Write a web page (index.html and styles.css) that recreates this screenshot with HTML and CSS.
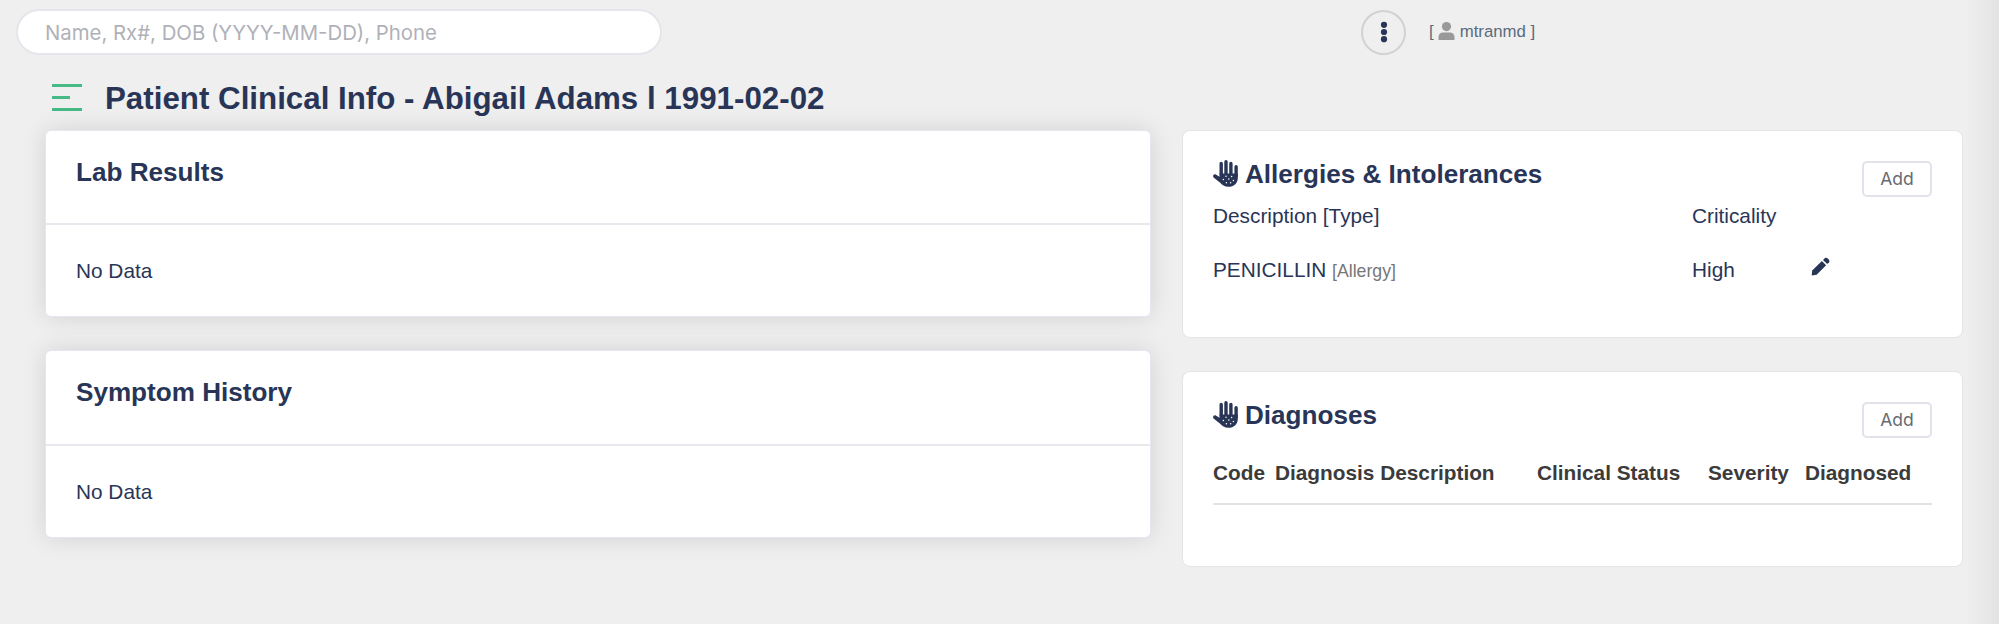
FILE: index.html
```html
<!DOCTYPE html>
<html lang="en">
<head>
<meta charset="utf-8">
<title>Patient Clinical Info</title>
<link rel="stylesheet" href="styles.css">
</head>
<body>
<svg class="defs" width="0" height="0">
  <symbol id="hand" viewBox="0 0 25 27">
    <path d="M8.2 14V3.4M13 14V1.7M17.9 14V3.4M23.1 16V6.8" fill="none" stroke="currentColor" stroke-width="3.4" stroke-linecap="round"/>
    <path d="M6.5 13.5H24.8V18C24.8 23.6 20.5 26.8 15.5 26.8C11.5 26.8 9 25 7.2 22.8L.6 17.4C-.8 15.9.8 13.6 2.8 14.5L6.5 16.7Z" fill="currentColor"/>
    <g fill="#fff"><circle cx="13" cy="16.2" r=".75"/><circle cx="18.6" cy="16.6" r=".75"/><circle cx="10.4" cy="19.6" r=".75"/><circle cx="15.8" cy="19" r=".75"/><circle cx="20.4" cy="20.4" r=".75"/><circle cx="13.4" cy="22.8" r=".75"/><circle cx="17.6" cy="22.8" r=".75"/></g>
  </symbol>
</svg>
<header class="topbar">
  <input class="search" type="text" placeholder="Name, Rx#, DOB (YYYY-MM-DD), Phone">
  <div class="account">
    <button class="more" aria-label="More"><svg width="8" height="22" viewBox="0 0 8 22"><circle cx="4" cy="3.8" r="3.1"/><circle cx="4" cy="11" r="3.1"/><circle cx="4" cy="18.2" r="3.1"/></svg></button>
    <span class="user">[<svg class="person" width="17" height="18" viewBox="0 0 17 18"><circle cx="8.5" cy="4.6" r="4.6"/><path d="M.5 18V15.2C.5 12.5 2.4 10.6 5 10.6H12C14.6 10.6 16.5 12.5 16.5 15.2V18Z"/></svg><span>mtranmd ]</span></span>
  </div>
</header>
<div class="heading">
  <svg class="menu" width="30" height="28" viewBox="0 0 30 28"><path d="M0 1.5H30M0 13.5H18M0 25.5H30"/></svg>
  <h1>Patient Clinical Info - Abigail Adams l 1991-02-02</h1>
</div>
<main class="columns">
  <div class="left">
    <section class="panel">
      <h2>Lab Results</h2>
      <p>No Data</p>
    </section>
    <section class="panel">
      <h2>Symptom History</h2>
      <p>No Data</p>
    </section>
  </div>
  <div class="right">
    <section class="card allergies">
      <div class="card-head"><h2><svg class="hand"><use href="#hand"/></svg>Allergies &amp; Intolerances</h2><button class="add">Add</button></div>
      <div class="row labels"><span>Description [Type]</span><span>Criticality</span></div>
      <div class="row"><span>PENICILLIN <small>[Allergy]</small></span><span>High</span>
        <svg class="pencil" width="19" height="19" viewBox="0 0 19 19"><path d="M.7 18.5L1.2 13.4L10.9 4L15.1 8.2L5.6 17.7Z"/><path d="M12 2.9L14 1C15.6-.4 19.7 3.3 18.1 5.2L16.2 7.1Z"/></svg></div>
    </section>
    <section class="card diagnoses">
      <div class="card-head"><h2><svg class="hand"><use href="#hand"/></svg>Diagnoses</h2><button class="add">Add</button></div>
      <div class="table-head"><span>Code</span><span>Diagnosis Description</span><span>Clinical Status</span><span>Severity</span><span>Diagnosed</span></div>
    </section>
  </div>
</main>
<div class="edge"></div>
</body>
</html>
```
FILE: styles.css
```css
* { box-sizing: border-box; }
body {
  margin: 0;
  height: 624px;
  overflow: hidden;
  background: #efefef;
  color: #293556;
  font: 20.8px/24px "Liberation Sans", Arial, sans-serif;
}
h1, h2, p { margin: 0; }
button { padding: 0; }
.defs { position: absolute; }
.topbar { display: flex; padding: 9px 0 0 16px; height: 80px; }
.search {
  width: 646px;
  height: 46px;
  padding: 0 27px;
  border: 2px solid #e5e5ec;
  border-radius: 23px;
  background: #fff;
  font: 20.35px Inter, sans-serif;
  outline: none;
}
.search::placeholder { color: #b0b1b8; opacity: 1; }
.account { display: flex; align-items: center; height: 46px; margin-left: 699px; }
.more {
  display: flex;
  align-items: center;
  justify-content: center;
  width: 45px;
  height: 45px;
  border: 2px solid #d2d2d2;
  border-radius: 50%;
  background: none;
  fill: #293556;
}
.user { display: flex; align-items: center; margin-left: 23px; font-size: 16.8px; color: #5b6b7c; white-space: pre; }
.person { margin: 0 5px 2px 4px; fill: #999; }
.heading { display: flex; padding: 0 0 0 52px; height: 49.6px; }
.menu { margin: 4px 23px 0 0; stroke: #45b986; stroke-width: 3; }
h1 { padding-top: 1px; font-size: 31.3px; line-height: 36px; white-space: nowrap; }
.columns { display: flex; gap: 31px; padding: 0 36px 0 45px; }
.left { display: flex; flex-direction: column; gap: 33.3px; width: 1106px; }
.panel {
  height: 187.4px;
  border: 1px solid #e6e6f0;
  border-radius: 6px;
  background: #fff;
  box-shadow: 0 0 24px rgba(0, 0, 0, .12);
}
h2 { font-size: 26.1px; line-height: 32px; }
.panel h2 { height: 94.3px; padding: 25px 30px 0; border-bottom: 2px solid #e8e8ee; }
.panel p { padding: 34px 30px 0; }
.right { display: flex; flex-direction: column; gap: 33px; flex: 1; }
.card { padding: 29px 30px; border: 1px solid #e4e4e4; border-radius: 8px; background: #fff; }
.allergies { height: 208px; }
.diagnoses { height: 196px; }
.card-head { display: flex; justify-content: space-between; height: 44px; }
.card-head h2 { display: flex; margin-top: -2px; white-space: nowrap; }
.hand { width: 25px; height: 27px; margin: 2px 7px 0 0; }
.add {
  width: 70px;
  height: 36px;
  margin-top: 1px;
  border: 2px solid #e2e2ea;
  border-radius: 5px;
  background: #fff;
  color: #676a70;
  font: 17.5px Inter, sans-serif;
}
.row { display: grid; grid-template-columns: 479px 119px 20px; padding-top: 30px; }
.row.labels { padding-top: 0; }
small { font-size: 17.7px; color: #777; }
.pencil { margin-top: -1px; fill: #293556; }
.table-head {
  display: grid;
  grid-template-columns: 62px 262px 171px 97px 1fr;
  height: 60px;
  padding-top: 16px;
  border-bottom: 2px solid #e2e2e2;
  color: #3b3b3b;
  font-weight: bold;
  white-space: nowrap;
}
.edge {
  position: absolute;
  top: 0;
  right: 0;
  width: 34px;
  height: 624px;
  background: linear-gradient(to right, rgba(0, 0, 0, 0), rgba(0, 0, 0, .05));
}
```
